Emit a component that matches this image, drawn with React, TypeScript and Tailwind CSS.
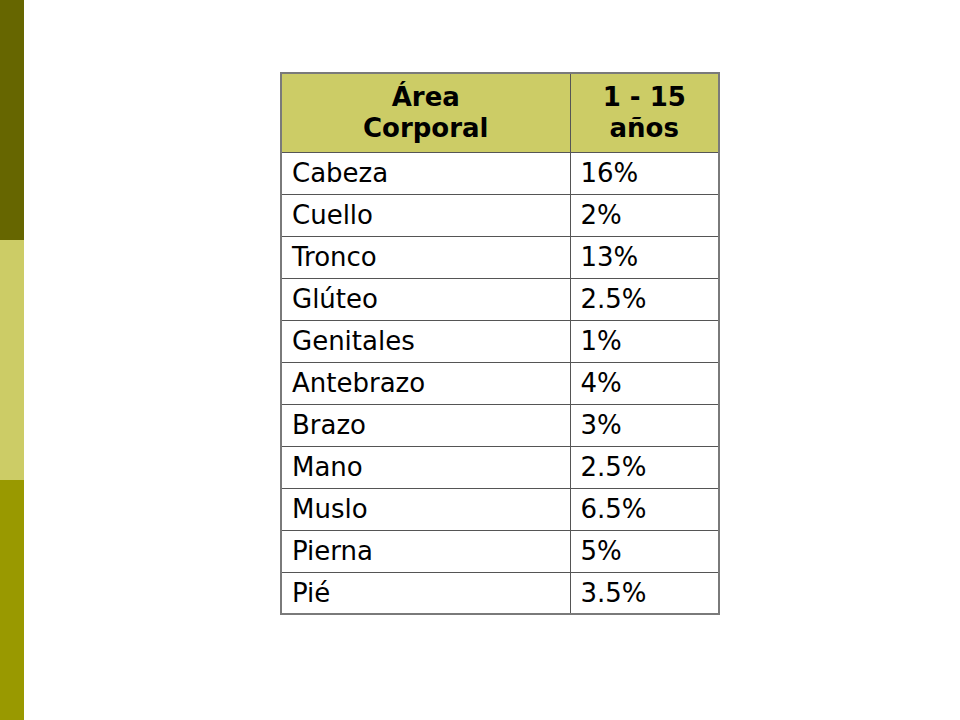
const rows: [string, string][] = [
  ['Cabeza', '16%'],
  ['Cuello', '2%'],
  ['Tronco', '13%'],
  ['Glúteo', '2.5%'],
  ['Genitales', '1%'],
  ['Antebrazo', '4%'],
  ['Brazo', '3%'],
  ['Mano', '2.5%'],
  ['Muslo', '6.5%'],
  ['Pierna', '5%'],
  ['Pié', '3.5%'],
];

export default function App() {
  return (
    <div className="flex h-[720px] w-[960px] bg-white font-['DejaVu_Sans',Verdana,sans-serif] text-black">
      <div className="flex w-[24px] flex-col">
        <div className="h-[240px] bg-[#666600]" />
        <div className="h-[240px] bg-[#cccc66]" />
        <div className="h-[240px] bg-[#999900]" />
      </div>
      <div className="pl-[256px] pt-[72px]">
        <table className="w-[440px] border-collapse border-2 border-[#7a7a7a] text-[26px]">
          <thead>
            <tr className="h-[79px] bg-[#cccc66]">
              <th className="w-[289px] border border-[#555] text-center font-bold leading-[31px]">
                Área
                <br />
                Corporal
              </th>
              <th className="border border-[#555] text-center font-bold leading-[31px]">
                1 - 15
                <br />
                años
              </th>
            </tr>
          </thead>
          <tbody>
            {rows.map(([a, b]) => (
              <tr key={a} className="h-[42px]">
                <td className="border border-[#555] pl-[10px] leading-[40px]">{a}</td>
                <td className="border border-[#555] pl-[10px] leading-[40px]">{b}</td>
              </tr>
            ))}
          </tbody>
        </table>
      </div>
    </div>
  );
}
